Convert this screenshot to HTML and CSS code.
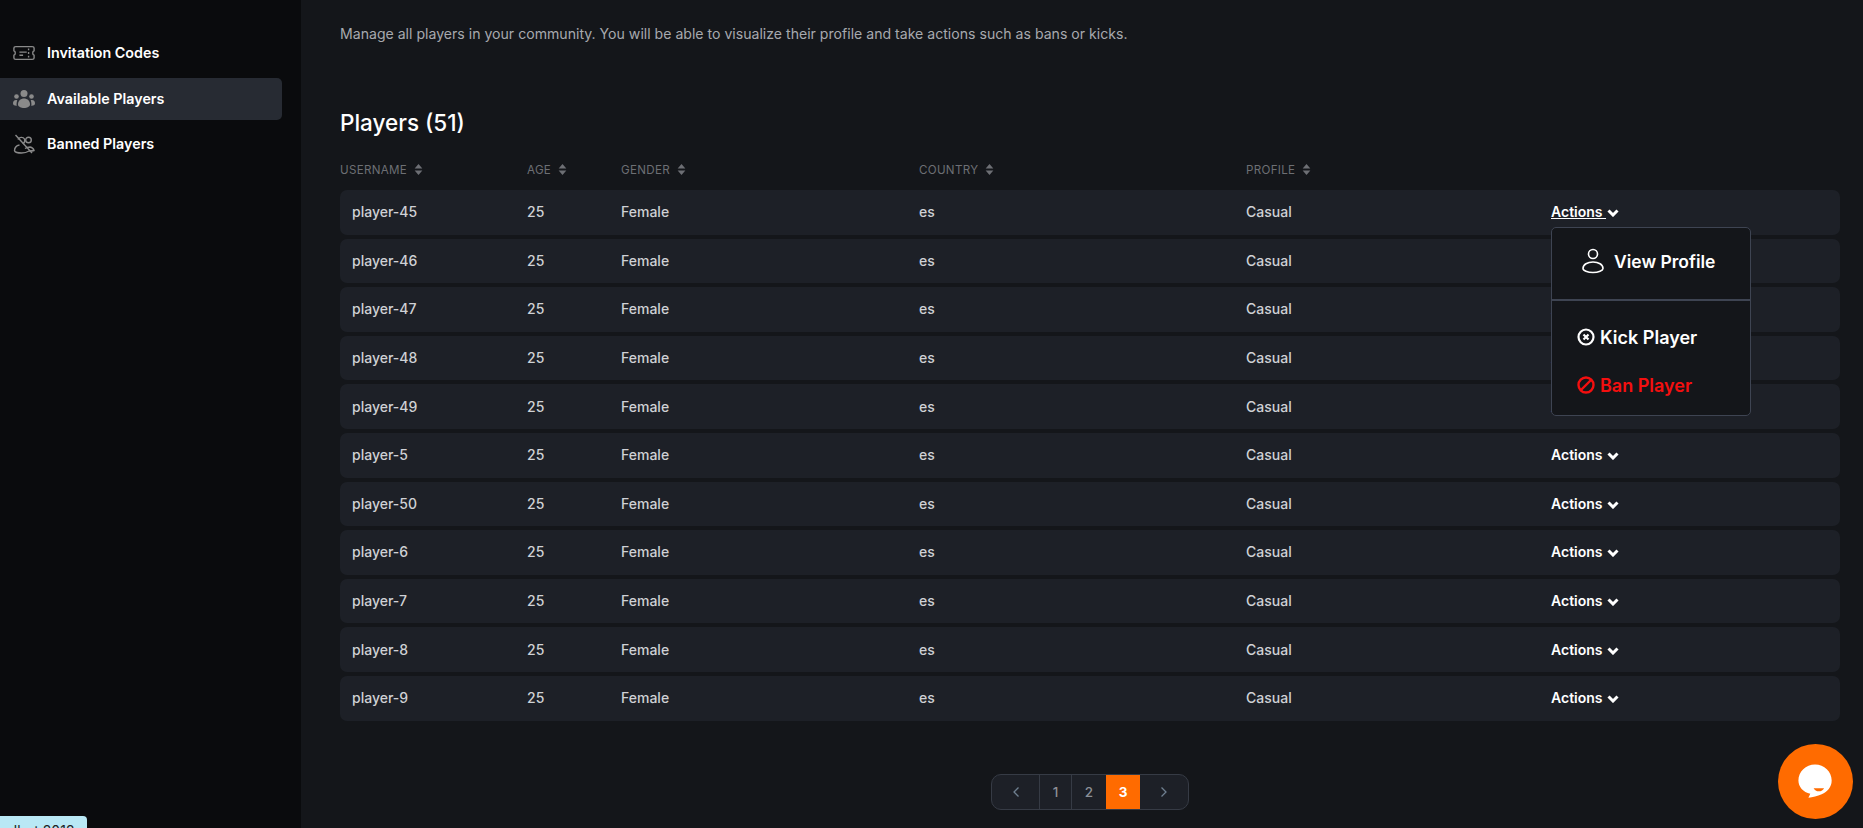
FILE: index.html
```html
<!DOCTYPE html>
<html lang="en">
<head>
<meta charset="utf-8">
<title>Available Players</title>
<link rel="stylesheet" href="styles.css">
</head>
<body>
<div class="app">
  <aside class="sidebar">
    <nav class="nav">
      <a class="nav-item"><svg class="nav-icon" viewBox="0 0 24 16" fill="none" stroke="#8a8a8a" stroke-width="1.5"><path d="M3 1h18c1 0 2 1 2 1.500V5.500c-2 .5-2 4.500 0 5v3c0 .5-1 1.500-2 1.500H3c-1 0-2-1-2-1.500v-3c2-.5 2-4.500 0-5v-3C1 2 2 1 3 1z"/><path d="M7 7h8M7 10.500h4M17 3v2M17 7v2M17 11v2"/></svg><span>Invitation Codes</span></a>
      <a class="nav-item active"><svg class="nav-icon" viewBox="0 0 22 19" fill="#8a8a8a"><circle cx="11" cy="4" r="3.500"/><circle cx="3.500" cy="7" r="2.300"/><circle cx="18.500" cy="7" r="2.300"/><path d="M5 15c0-4 3-6 6-6s6 2 6 6c0 2-3 3.500-6 3.500S5 17 5 15z"/><path d="M0 14c0-2 1-3.500 3-3.500.5 0 1 .1 1.300.3C3.800 12 3.500 13.500 3.600 16.500 1.500 16 0 15.500 0 14zM22 14c0-2-1-3.500-3-3.500-.5 0-1 .1-1.300.3.500 1.200.8 2.700.7 5.700 2.100-.5 3.600-1 3.600-2.500z"/></svg><span>Available Players</span></a>
      <a class="nav-item"><svg class="nav-icon" viewBox="0 0 22 20" fill="none" stroke="#8a8a8a" stroke-width="1.400"><circle cx="15.500" cy="6" r="2.800"/><path d="M5 5.500c1-2.500 5-3 6.500-.5 1 2-.5 4-1.500 5M1.500 17c0-3 2-5.500 5-6M1.500 17c1 1.500 4 2 7 2s6-1 7.500-2c2 0 3.500 0 5-.5-.5-2-2-3-4-3.500-2.500 0-3.500.5-5 1.500"/><path d="M2.500 1L19 19"/></svg><span>Banned Players</span></a>
    </nav>
  </aside>
  <main class="main">
    <p class="intro">Manage all players in your community. You will be able to visualize their profile and take actions such as bans or kicks.</p>
    <h1 class="title">Players (51)</h1>
    <table class="players">
      <colgroup><col class="c1"><col class="c2"><col class="c3"><col class="c4"><col class="c5"><col class="c6"></colgroup>
      <thead>
        <tr>
          <th>USERNAME<svg class="sort" viewBox="0 0 8 10"><path d="M4 0l3.500 4h-7zM4 10L.5 6h7z"/></svg></th>
          <th>AGE<svg class="sort" viewBox="0 0 8 10"><path d="M4 0l3.500 4h-7zM4 10L.5 6h7z"/></svg></th>
          <th>GENDER<svg class="sort" viewBox="0 0 8 10"><path d="M4 0l3.500 4h-7zM4 10L.5 6h7z"/></svg></th>
          <th>COUNTRY<svg class="sort" viewBox="0 0 8 10"><path d="M4 0l3.500 4h-7zM4 10L.5 6h7z"/></svg></th>
          <th>PROFILE<svg class="sort" viewBox="0 0 8 10"><path d="M4 0l3.500 4h-7zM4 10L.5 6h7z"/></svg></th>
          <th></th>
        </tr>
      </thead>
      <tbody>
        <tr><td>player-45</td><td>25</td><td>Female</td><td>es</td><td>Casual</td><td class="act">
          <div class="menu-anchor">
            <a class="actions open">Actions <svg class="chev" viewBox="0 0 12 8"><path d="M1.500 1.500L6 6l4.500-4.500" fill="none" stroke="#fff" stroke-width="3"/></svg></a>
            <div class="menu">
              <div class="menu-top"><svg class="user-ic" viewBox="0 0 22 26" fill="none" stroke="#fff" stroke-width="1.600"><circle cx="11" cy="6" r="4.500"/><path d="M1 20.500c0-4 4.500-6.500 10-6.500s10 2.500 10 6.500c0 2-4.500 4-10 4s-10-2-10-4z"/></svg><span>View Profile</span></div>
              <div class="menu-bottom">
                <div class="menu-row"><svg class="m-ic" viewBox="0 0 18 18" fill="none" stroke="#fff" stroke-width="2.200"><circle cx="9" cy="9" r="7.500"/><path d="M6.500 6.500l5 5M11.500 6.500l-5 5"/></svg><span>Kick Player</span></div>
                <div class="menu-row danger"><svg class="m-ic" viewBox="0 0 18 18" fill="none" stroke="#f40f0f" stroke-width="2.400"><circle cx="9" cy="9" r="7.500"/><path d="M14 4L4 14"/></svg><span>Ban Player</span></div>
              </div>
            </div>
          </div>
        </td></tr>
        <tr><td>player-46</td><td>25</td><td>Female</td><td>es</td><td>Casual</td><td class="act"><a class="actions">Actions <svg class="chev" viewBox="0 0 12 8"><path d="M1.500 1.500L6 6l4.500-4.500" fill="none" stroke="#fff" stroke-width="3"/></svg></a></td></tr>
        <tr><td>player-47</td><td>25</td><td>Female</td><td>es</td><td>Casual</td><td class="act"><a class="actions">Actions <svg class="chev" viewBox="0 0 12 8"><path d="M1.500 1.500L6 6l4.500-4.500" fill="none" stroke="#fff" stroke-width="3"/></svg></a></td></tr>
        <tr><td>player-48</td><td>25</td><td>Female</td><td>es</td><td>Casual</td><td class="act"><a class="actions">Actions <svg class="chev" viewBox="0 0 12 8"><path d="M1.500 1.500L6 6l4.500-4.500" fill="none" stroke="#fff" stroke-width="3"/></svg></a></td></tr>
        <tr><td>player-49</td><td>25</td><td>Female</td><td>es</td><td>Casual</td><td class="act"><a class="actions">Actions <svg class="chev" viewBox="0 0 12 8"><path d="M1.500 1.500L6 6l4.500-4.500" fill="none" stroke="#fff" stroke-width="3"/></svg></a></td></tr>
        <tr><td>player-5</td><td>25</td><td>Female</td><td>es</td><td>Casual</td><td class="act"><a class="actions">Actions <svg class="chev" viewBox="0 0 12 8"><path d="M1.500 1.500L6 6l4.500-4.500" fill="none" stroke="#fff" stroke-width="3"/></svg></a></td></tr>
        <tr><td>player-50</td><td>25</td><td>Female</td><td>es</td><td>Casual</td><td class="act"><a class="actions">Actions <svg class="chev" viewBox="0 0 12 8"><path d="M1.500 1.500L6 6l4.500-4.500" fill="none" stroke="#fff" stroke-width="3"/></svg></a></td></tr>
        <tr><td>player-6</td><td>25</td><td>Female</td><td>es</td><td>Casual</td><td class="act"><a class="actions">Actions <svg class="chev" viewBox="0 0 12 8"><path d="M1.500 1.500L6 6l4.500-4.500" fill="none" stroke="#fff" stroke-width="3"/></svg></a></td></tr>
        <tr><td>player-7</td><td>25</td><td>Female</td><td>es</td><td>Casual</td><td class="act"><a class="actions">Actions <svg class="chev" viewBox="0 0 12 8"><path d="M1.500 1.500L6 6l4.500-4.500" fill="none" stroke="#fff" stroke-width="3"/></svg></a></td></tr>
        <tr><td>player-8</td><td>25</td><td>Female</td><td>es</td><td>Casual</td><td class="act"><a class="actions">Actions <svg class="chev" viewBox="0 0 12 8"><path d="M1.500 1.500L6 6l4.500-4.500" fill="none" stroke="#fff" stroke-width="3"/></svg></a></td></tr>
        <tr><td>player-9</td><td>25</td><td>Female</td><td>es</td><td>Casual</td><td class="act"><a class="actions">Actions <svg class="chev" viewBox="0 0 12 8"><path d="M1.500 1.500L6 6l4.500-4.500" fill="none" stroke="#fff" stroke-width="3"/></svg></a></td></tr>
      </tbody>
    </table>
    <div class="pager-wrap">
      <div class="pager">
        <a class="pg pg-arrow"><svg viewBox="0 0 8 12" class="arrow"><path d="M6.500 1.500L2 6l4.500 4.500" fill="none" stroke="#6f7f90" stroke-width="1.300"/></svg></a>
        <a class="pg pg-num">1</a>
        <a class="pg pg-num">2</a>
        <a class="pg pg-cur">3</a>
        <a class="pg pg-arrow last"><svg viewBox="0 0 8 12" class="arrow"><path d="M1.500 1.500L6 6l-4.500 4.500" fill="none" stroke="#6f7f90" stroke-width="1.300"/></svg></a>
      </div>
    </div>
  </main>
</div>
<div class="tip">albot:2012</div>
<button class="chat" aria-label="Chat"><svg viewBox="0 0 40 40" width="38" height="40"><path d="M19 1.500c9.700 0 17.500 7.400 17.500 16.800 0 7-4.500 11.800-10.500 14.500-4.500 2-9.500 3-14 3.700l2-4.200C6.500 30.600 1.500 25 1.500 18.300 1.500 8.900 9.300 1.500 19 1.500z" fill="#fff"/><path d="M17.500 26.500h11c-1 2-3 3.300-5.500 3.300s-4.500-1.300-5.500-3.300z" fill="#ff6b00"/></svg></button>
</body>
</html>
```
FILE: styles.css
```css
* { box-sizing: border-box; }
html, body { margin: 0; height: 100%; overflow: hidden; background: #14161a; }
body { font-family: "Inter", "Noto Sans", sans-serif; color: #fff; }
.app { display: flex; height: 828px; }
.sidebar { width: 301px; flex: none; background: #0a0b0d; padding-top: 32px; padding-right: 19px; }
.nav { display: flex; flex-direction: column; }
.nav-item { display: flex; align-items: center; gap: 12px; height: 42px; padding-left: 13px; margin-bottom: 3.500px; font-size: 14.300px; font-weight: 600; color: #fff; border-radius: 0 5px 5px 0; }
.nav-item span { margin-top: -1px; }
.nav-item.active { background: #272b33; }
.nav-icon { width: 22px; height: 20px; flex: none; }
.main { flex: 1; min-width: 0; padding: 0 23px 0 39px; }
.intro { margin: 23.500px 0 0; font-size: 14.100px; line-height: 20px; color: #a7a9ae; }
.title { margin: 64.500px 0 0; font-size: 22.500px; line-height: 30px; font-weight: 500; color: #fff; }
.players { width: 100%; margin-top: 13px; border-collapse: separate; border-spacing: 0 4px; table-layout: fixed; }
.c1 { width: 187px; } .c2 { width: 94px; } .c3 { width: 298px; } .c4 { width: 327px; } .c5 { width: 305px; }
th { height: 31px; padding: 0 0 1px; text-align: left; font-size: 11.600px; font-weight: 400; letter-spacing: .3px; color: #6d6f74; }
.sort { width: 9px; height: 11px; margin-left: 7px; fill: #6d6f74; vertical-align: -1px; }
td { height: 44.600px; padding: 0 0 1px; font-size: 14px; font-weight: 500; color: #cfd1d5; background: #1d2027; }
td:first-child { padding-left: 12px; border-radius: 7px 0 0 7px; }
td:last-child { border-radius: 0 7px 7px 0; }
.act { font-weight: 600; }
.actions { color: #fff; font-size: 14px; }
.actions.open { text-decoration: underline; }
.chev { width: 12px; height: 8px; margin-left: 1px; vertical-align: 0; }
.menu-anchor { position: relative; }
.menu { position: absolute; left: 0; top: 24px; width: 200px; height: 189px; background: #14161a; border: 1px solid #3e4452; border-radius: 5px; z-index: 5; }
.menu-top { height: 73px; padding: 0 0 5px 30px; display: flex; align-items: center; gap: 10px; font-size: 17.500px; font-weight: 600; color: #fff; border-bottom: 2px solid #3e4452; }
.user-ic { width: 22px; height: 26px; }
.menu-bottom { padding-top: 12px; }
.menu-row { height: 48px; display: flex; align-items: center; gap: 5px; padding-left: 25px; font-size: 18px; font-weight: 600; color: #fff; }
.menu-row.danger { color: #f40f0f; }
.m-ic { width: 18px; height: 18px; }
.pager-wrap { display: flex; justify-content: center; margin-top: 49px; }
.pager { display: flex; height: 36px; border: 1px solid #363b45; border-radius: 10px; background: #1d2027; overflow: hidden; }
.pg { display: flex; align-items: center; justify-content: center; font-size: 13.500px; font-weight: 500; color: #8b8f96; }
.pg-arrow { width: 48px; border-right: 1px solid #363b45; }
.pg-arrow.last { border-right: 0; }
.pg-num { width: 32px; border-right: 1px solid #363b45; }
.pg-num + .pg-num { border-right: 0; width: 34px; }
.pg-cur { width: 34px; background: #ff6b00; color: #fff; font-weight: 700; }
.arrow { width: 8px; height: 12px; }
.tip { position: fixed; left: 0; top: 816px; width: 87px; height: 12px; padding: 7px 0 0 6px; background: #b9e8f5; color: #222; font-size: 14px; line-height: 16px; border-radius: 0 4px 0 0; overflow: hidden; }
.chat { position: fixed; left: 1778px; top: 744px; width: 75px; height: 75px; border: 0; border-radius: 50%; background: #ff6b00; display: flex; align-items: center; justify-content: center; padding: 0; }
```
